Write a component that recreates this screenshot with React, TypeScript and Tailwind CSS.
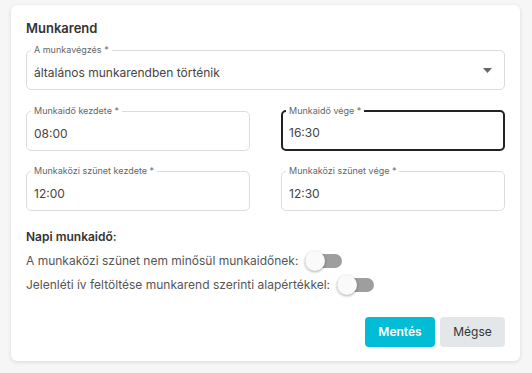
import { useState } from "react";

const font = { fontFamily: 'Inter, "DejaVu Sans", sans-serif' };

interface FieldProps {
  label: string;
  value: string;
  focused?: boolean;
  select?: boolean;
}

function Field({ label, value, focused, select }: FieldProps) {
  return (
    <fieldset
      className={`h-[45px] rounded-[5px] ${
        focused ? "border-2 border-[#222] px-[3px]" : "border border-[#dcdcdc] px-[4px]"
      }`}
    >
      <legend className="px-[3px] text-[9px] leading-[10px] text-[#666]">{label}</legend>
      <div
        className={`flex items-center justify-between pl-[3px] text-[12px] leading-[16px] text-[#444] ${
          focused ? "pt-[9px]" : "pt-[10px]"
        }`}
      >
        <span>{value}</span>
        {select && (
          <svg width="9" height="5" viewBox="0 0 9 5" className="relative -top-[3px] mr-[8px]">
            <path d="M0 0h9L4.5 5z" fill="#666" />
          </svg>
        )}
      </div>
    </fieldset>
  );
}

function Toggle({ on, onToggle }: { on: boolean; onToggle: () => void }) {
  return (
    <button
      type="button"
      onClick={onToggle}
      className="relative ml-[7px] h-[14px] w-[37px] rounded-full bg-[#9e9e9e]"
    >
      <span
        className={`absolute top-1/2 h-[20px] w-[20px] -translate-y-1/2 rounded-full bg-[#fafafa] shadow-[0_1px_3px_rgba(0,0,0,0.35)] ${
          on ? "left-[17px]" : "left-0"
        }`}
      />
    </button>
  );
}

export default function App() {
  const [breakOff, setBreakOff] = useState(false);
  const [prefill, setPrefill] = useState(false);

  return (
    <div
      className="h-[373px] w-[532px] bg-[#f6f6f6] pl-[11px] pr-[12px] pt-[5px]"
      style={font}
    >
      <div className="rounded-[6px] bg-white px-[15px] pb-[14px] pt-[15px] shadow-[0_1px_4px_rgba(0,0,0,0.12)]">
        <h2 className="text-[13px] font-semibold leading-[16px] text-[#333]">Munkarend</h2>
        <div className="mt-[9px]">
          <Field label="A munkavégzés *" value="általános munkarendben történik" select />
        </div>
        <div className="mt-[16px] grid grid-cols-2 gap-x-[31px] gap-y-[15px]">
          <Field label="Munkaidő kezdete *" value="08:00" />
          <Field label="Munkaidő vége *" value="16:30" focused />
          <Field label="Munkaközi szünet kezdete *" value="12:00" />
          <Field label="Munkaközi szünet vége *" value="12:30" />
        </div>
        <h3 className="mt-[18px] text-[12px] font-semibold leading-[16px] text-[#333]">
          Napi munkaidő:
        </h3>
        <div className="mt-[8px] flex h-[16px] items-center text-[12px] text-[#555]">
          <span>A munkaközi szünet nem minősül munkaidőnek:</span>
          <Toggle on={breakOff} onToggle={() => setBreakOff(!breakOff)} />
        </div>
        <div className="mt-[8px] flex h-[16px] items-center text-[12px] text-[#555]">
          <span>Jelenléti ív feltöltése munkarend szerinti alapértékkel:</span>
          <Toggle on={prefill} onToggle={() => setPrefill(!prefill)} />
        </div>
        <div className="mt-[24px] flex justify-end gap-[5px]">
          <button
            type="button"
            className="h-[30px] w-[70px] rounded-[4px] bg-[#00bcd4] text-[12px] font-semibold text-white"
          >
            Mentés
          </button>
          <button
            type="button"
            className="h-[30px] w-[65px] rounded-[4px] bg-[#e3e7ea] text-[12px] text-[#333]"
          >
            Mégse
          </button>
        </div>
      </div>
    </div>
  );
}
